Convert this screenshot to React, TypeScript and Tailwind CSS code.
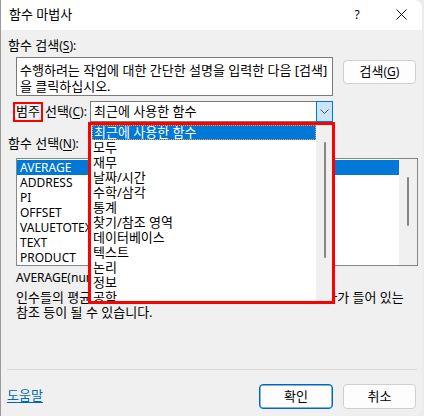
import React from "react";

const U = ({ c }: { c: string }) => (
  <span className="underline underline-offset-[2px] decoration-[1px]">{c}</span>
);

const K = ({ c }: { c: string }) => (
  <span className="text-[12px]">
    (<U c={c} />)
  </span>
);

export default function App() {
  const cats = [
    "최근에 사용한 함수",
    "모두",
    "재무",
    "날짜/시간",
    "수학/삼각",
    "통계",
    "찾기/참조 영역",
    "데이터베이스",
    "텍스트",
    "논리",
    "정보",
    "공학",
  ];
  const funcs = ["AVERAGE", "ADDRESS", "PI", "OFFSET", "VALUETOTEXT", "TEXT", "PRODUCT"];

  return (
    <div className="w-[424px] h-[416px] bg-[#ececec] font-['Noto_Sans','Noto_Sans_CJK_KR',sans-serif] text-[13px] leading-[15px] text-black overflow-hidden">
      <div className="relative w-[422px] h-[416px] flex flex-col bg-[#f0f0f0] border-l border-[#9a9a9a] rounded-r-[8px] overflow-hidden">
        {/* Title bar */}
        <div className="h-[30px] shrink-0 bg-white flex items-center">
          <div className="pl-[8px] pb-[2px]">함수 마법사</div>
          <div className="ml-auto w-[46px] h-full flex items-center justify-center pb-[2px] text-[12px]">?</div>
          <div className="w-[42px] h-full flex items-center justify-center pb-[1px]">
            <svg width="11" height="11" viewBox="0 0 11 11">
              <path d="M0.5 0.5 L10.5 10.5 M10.5 0.5 L0.5 10.5" stroke="#111" strokeWidth="1" fill="none" />
            </svg>
          </div>
        </div>

        {/* Body */}
        <div className="flex flex-col pl-[7px] flex-1">
          <div className="mt-[8px] h-[15px] whitespace-nowrap">
            함수 검색<K c="S" />
            <span className="text-[12px]">:</span>
          </div>

          <div className="mt-[4px] flex items-start">
            <div className="ml-[8px] w-[317px] h-[39px] bg-white border border-[#7a7a7a] pl-[3px] pt-[4px] leading-[16px] whitespace-nowrap overflow-hidden">
              수행하려는 작업에 대한 간단한 설명을 입력한 다음 [검색]
              <br />을 클릭하십시오.
            </div>
            <button className="ml-[10px] mt-[3px] w-[73px] h-[24px] bg-[#fdfdfd] border border-[#d0d0d0] rounded-[4px] flex items-center justify-center pb-[1px]">
              검색<K c="G" />
            </button>
          </div>

          <div className="mt-[5px] flex items-center h-[21px]">
            <div className="w-[82px] h-full flex items-center">
              <div className="ml-[5px] h-[20px] border-2 border-[#ff0000] px-[1px] flex items-center">
                범주
              </div>
              <div className="ml-[2px] whitespace-nowrap">
                선택<K c="C" />
                <span className="text-[12px]">:</span>
              </div>
            </div>
            <div className="w-[243px] h-[21px] bg-white border border-[#7a7a7a] flex">
              <div className="flex-1 pl-[3px] flex items-center whitespace-nowrap">최근에 사용한 함수</div>
              <div className="w-[17px] -my-px -mr-px bg-[#cce4f7] border border-[#0078d7] flex items-center justify-center">
                <svg width="9" height="6" viewBox="0 0 9 6">
                  <path d="M0.5 0.5 L4.5 4.5 L8.5 0.5" stroke="#555" strokeWidth="1" fill="none" />
                </svg>
              </div>
            </div>
          </div>

          <div className="mt-[14px] h-[15px] whitespace-nowrap">
            함수 선택<K c="N" />
            <span className="text-[12px]">:</span>
          </div>

          <div className="mt-[7px] ml-[8px] w-[402px] h-[108px] bg-white border border-[#828790] flex text-[12px]">
            <div className="flex-1 pt-[1px]">
              {funcs.map((f, i) => (
                <div
                  key={f}
                  className={
                    i === 0
                      ? "h-[15px] pl-[3px] bg-[#0078d7] text-white whitespace-nowrap"
                      : "h-[15px] pl-[3px] whitespace-nowrap"
                  }
                >
                  {f}
                </div>
              ))}
            </div>
            <div className="w-[18px] bg-[#f0f0f0] pt-[18px] pl-[8px]">
              <div className="w-[2px] h-[49px] bg-[#858585] rounded-full" />
            </div>
          </div>

          <div className="mt-[4px] ml-[8px] h-[15px] whitespace-nowrap text-[12px]">AVERAGE(number1,number2,...)</div>

          <div className="mt-[5px] ml-[8px] whitespace-nowrap">
            <div className="h-[15px]">인수들의 평균을 반환합니다. 인수는 숫자나 이름, 배열, 숫자가 들어 있는</div>
            <div className="h-[15px]">참조 등이 될 수 있습니다.</div>
          </div>

          <div className="mt-[49px] -ml-[1px] w-[410px] h-px bg-[#d9d9d9]" />

          <div className="mt-[14px] h-[25px] flex items-center">
            <a className="-ml-[1px] mb-[2px] text-[#0067c0] underline underline-offset-[2px] whitespace-nowrap">
              도움말
            </a>
            <button className="ml-auto w-[74px] h-[25px] bg-[#fdfdfd] border border-[#0067c0] shadow-[inset_0_0_0_0.5px_#0067c0] rounded-[4px] flex items-center justify-center pb-[1px]">
              확인
            </button>
            <button className="ml-[10px] mr-[6px] w-[73px] h-[25px] bg-[#fdfdfd] border border-[#d0d0d0] rounded-[4px] flex items-center justify-center pb-[1px]">
              취소
            </button>
          </div>
        </div>

        {/* Dropdown list overlay */}
        <div className="absolute left-[87px] top-[122px] w-[247px] h-[182px] border-[3px] border-[#ff0000] bg-white flex">
          <div className="w-[225px] overflow-hidden">
            {cats.map((c, i) => (
              <div
                key={c}
                className={
                  i === 0
                    ? "ml-[1px] h-[15px] bg-[#0078d7] text-white border border-dotted border-[#f0a040] pl-[1px] flex items-center whitespace-nowrap"
                    : "h-[15px] pl-[2px] flex items-center whitespace-nowrap"
                }
              >
                {c}
              </div>
            ))}
          </div>
          <div className="flex-1 bg-[#f0f0f0] pt-[17px] pl-[8px]">
            <div className="w-[2px] h-[116px] bg-[#858585] rounded-full" />
          </div>
        </div>
      </div>
    </div>
  );
}
